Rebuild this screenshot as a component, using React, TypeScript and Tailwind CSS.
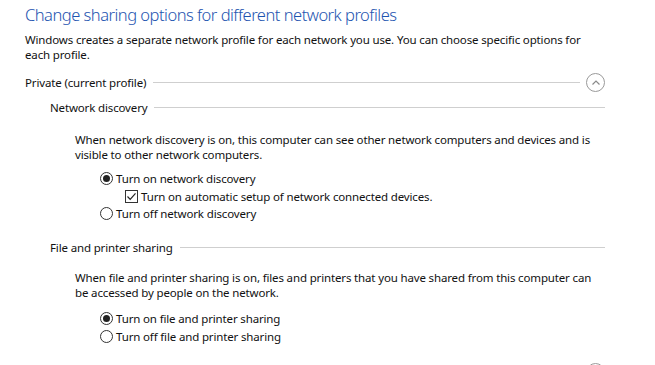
import React from "react";

function Radio({ checked }: { checked?: boolean }) {
  return (
    <span className="flex-none w-[13px] h-[13px] rounded-full border border-[#333] flex items-center justify-center mr-[3px] bg-white">
      {checked && <span className="w-[7px] h-[7px] rounded-full bg-[#222]" />}
    </span>
  );
}

function Check() {
  return (
    <span className="flex-none w-[13px] h-[13px] border border-[#333] flex items-center justify-center mr-[3px] bg-white">
      <svg width="11" height="11" viewBox="0 0 11 11">
        <path d="M1.5 5.5 L4.2 8.3 L9.5 2.3" fill="none" stroke="#222" strokeWidth="1.2" />
      </svg>
    </span>
  );
}

function Collapse() {
  return (
    <span className="flex-none w-[19px] h-[19px] rounded-full border border-[#9a9a9a] flex items-center justify-center">
      <svg width="10" height="8" viewBox="0 0 10 8">
        <path d="M1.5 5.5 L5 2 L8.5 5.5" fill="none" stroke="#8a8a8a" strokeWidth="1.2" />
      </svg>
    </span>
  );
}

function Heading({
  label,
  indent,
  icon,
}: {
  label: string;
  indent: string;
  icon?: boolean;
}) {
  return (
    <div className={`flex items-center pr-[50px] ${indent}`}>
      <span className="whitespace-nowrap">{label}</span>
      <span className="flex-1 h-px bg-[#cfcfcf] ml-[7px]" />
      {icon && (
        <span className="ml-[6px]">
          <Collapse />
        </span>
      )}
    </div>
  );
}

export default function App() {
  return (
    <div className="w-[655px] h-[365px] overflow-hidden bg-white text-[#111] text-[11.5px] tracking-[-0.15px] leading-[15px] font-['Segoe_UI','Noto_Sans',sans-serif]">
      <div className="pl-[25px]">
        <h1 className="pt-[4px] text-[16.5px] tracking-[-0.5px] leading-[22px] text-[#1d54b0] font-light">
          Change sharing options for different network profiles
        </h1>
        <p className="mt-[6px]">
          Windows creates a separate network profile for each network you use. You can choose specific options for
          <br />
          each profile.
        </p>

        <div className="mt-[11px]">
          <Heading label="Private (current profile)" indent="" icon />
        </div>

        <div className="mt-[8px]">
          <Heading label="Network discovery" indent="pl-[25px]" />
        </div>

        <div className="pl-[50px] mt-[17px]">
          <p>
            When network discovery is on, this computer can see other network computers and devices and is
            <br />
            visible to other network computers.
          </p>
          <div className="pl-[25px] mt-[8px]">
            <div className="flex items-center h-[17px]">
              <Radio checked />
              Turn on network discovery
            </div>
            <div className="flex items-center h-[18px] pl-[25px]">
              <Check />
              Turn on automatic setup of network connected devices.
            </div>
            <div className="flex items-center h-[17px]">
              <Radio />
              Turn off network discovery
            </div>
          </div>
        </div>

        <div className="mt-[18px]">
          <Heading label="File and printer sharing" indent="pl-[25px]" />
        </div>

        <div className="pl-[50px] mt-[15px]">
          <p>
            When file and printer sharing is on, files and printers that you have shared from this computer can
            <br />
            be accessed by people on the network.
          </p>
          <div className="pl-[25px] mt-[9px]">
            <div className="flex items-center h-[18px]">
              <Radio checked />
              Turn on file and printer sharing
            </div>
            <div className="flex items-center h-[18px]">
              <Radio />
              Turn off file and printer sharing
            </div>
          </div>
        </div>

        <div className="mt-[18px]">
          <Heading label="Guest or Public" indent="" icon />
        </div>
      </div>
    </div>
  );
}
